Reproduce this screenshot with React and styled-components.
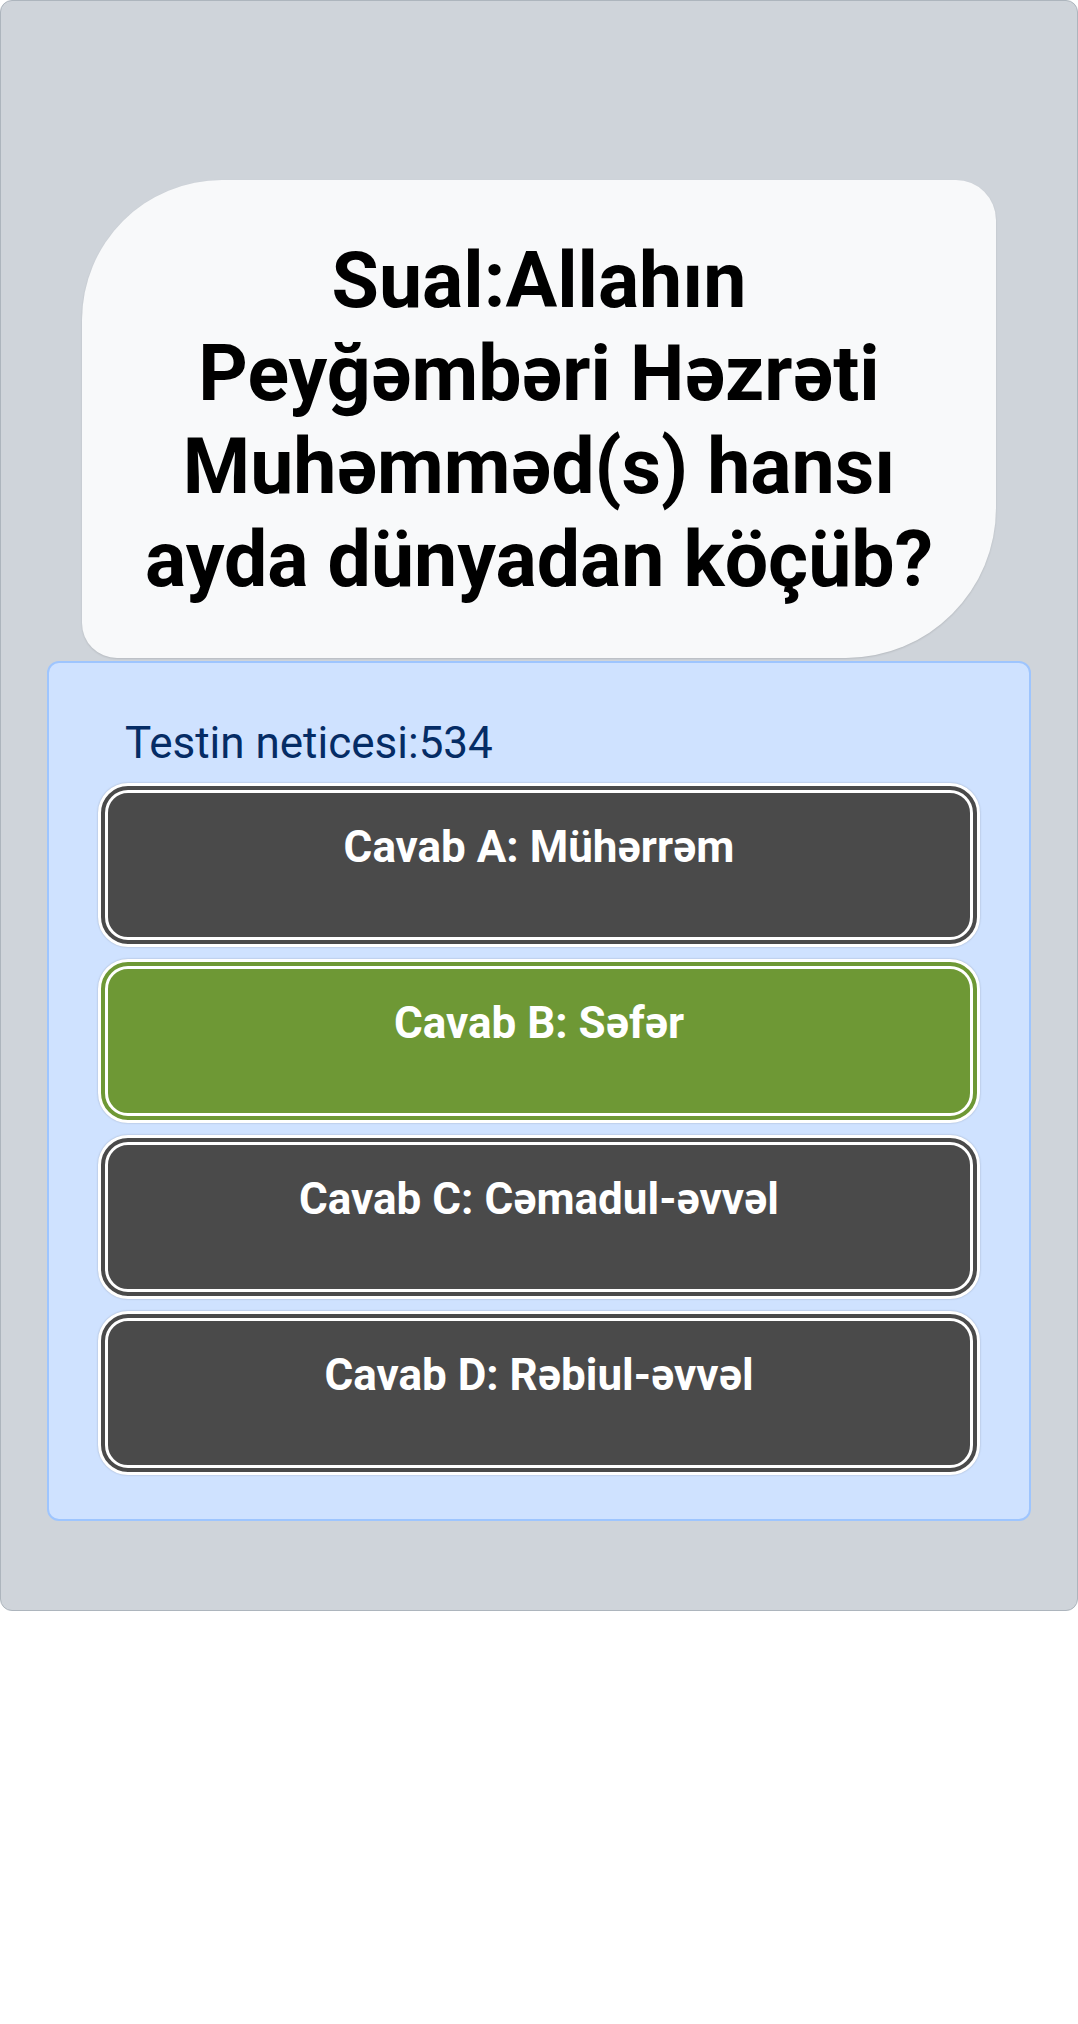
import React from 'react';
import styled, { createGlobalStyle } from 'styled-components';

const GlobalStyle = createGlobalStyle`
	* {
		box-sizing: border-box;
	}
	body {
		margin: 0;
		background: #fff;
		font-family: Roboto, 'Liberation Sans', Arial, sans-serif;
	}
`;

const QuizCard = styled.div`
	background-color: #cfd4da;
	border: 1px solid #adb5bd;
	border-radius: 12px;
	padding: 179px 0 89px;
	display: flex;
	flex-direction: column;
	align-items: center;
`;

const QuestionBubble = styled.div`
	width: 85%;
	background-color: #f8f9fa;
	border-radius: 140px 40px 150px 35px;
	box-shadow: 0 1px 2px rgba(0, 0, 0, 0.12);
	padding: 55px 40px 51px;
	margin-bottom: 3px;
`;

const QuestionText = styled.h1`
	margin: 0;
	font-size: 77px;
	line-height: 93px;
	font-weight: 700;
	color: #000;
	text-align: center;
`;

const ResultPanel = styled.div`
	width: 984px;
	background-color: #cfe2ff;
	border: 2px solid #9ec5fe;
	border-radius: 12px;
	padding: 54px 49px 44px;
`;

const Score = styled.p`
	margin: 0 0 13px 27px;
	font-size: 44px;
	line-height: 53px;
	font-weight: 400;
	color: #052c65;
`;

const AnswerList = styled.div`
	display: flex;
	flex-direction: column;
	gap: 12px;
`;

const AnswerButton = styled.button`
	height: 164px;
	width: 100%;
	border: 10px double #fff;
	border-radius: 30px;
	background-color: ${(p) => (p.$correct ? '#6e9835' : '#4a4a4a')};
	color: #fff;
	font-family: inherit;
	font-size: 44px;
	line-height: 52px;
	font-weight: 700;
	padding: 28px 20px 0;
	display: flex;
	justify-content: center;
	align-items: flex-start;
	box-shadow: 0 0 2px rgba(0, 0, 0, 0.25);
	cursor: pointer;
`;

const answers = [
	{ id: 'A', text: 'Mühərrəm' },
	{ id: 'B', text: 'Səfər', correct: true },
	{ id: 'C', text: 'Cəmadul-əvvəl' },
	{ id: 'D', text: 'Rəbiul-əvvəl' },
];

const App = () => {
	return (
		<>
			<GlobalStyle />
			<QuizCard>
				<QuestionBubble>
					<QuestionText>
						Sual:Allahın Peyğəmbəri Həzrəti Muhəmməd(s) hansı ayda dünyadan köçüb?
					</QuestionText>
				</QuestionBubble>
				<ResultPanel>
					<Score>Testin neticesi:534</Score>
					<AnswerList>
						{answers.map((item) => (
							<AnswerButton key={item.id} $correct={item.correct}>
								Cavab {item.id}: {item.text}
							</AnswerButton>
						))}
					</AnswerList>
				</ResultPanel>
			</QuizCard>
		</>
	);
};

export default App;
